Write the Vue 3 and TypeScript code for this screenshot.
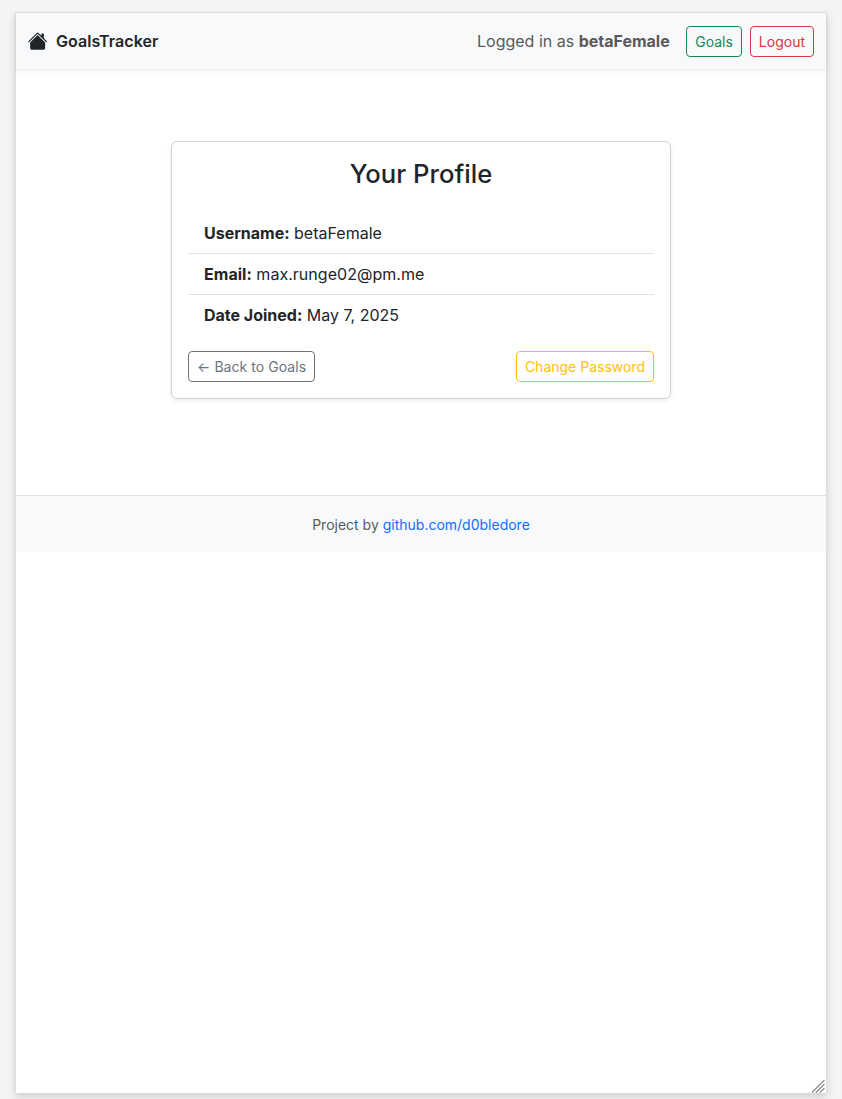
<script setup lang="ts">
interface ProfileField {
  label: string
  value: string
}

const username = 'betaFemale'
const fields: ProfileField[] = [
  { label: 'Username:', value: username },
  { label: 'Email:', value: 'max.runge02@pm.me' },
  { label: 'Date Joined:', value: 'May 7, 2025' },
]
</script>

<template>
  <div class="backdrop">
    <div class="viewport">
      <nav class="navbar">
        <a class="brand">
          <svg class="house" viewBox="0.3 0 16 16" width="20" height="20" fill="currentColor" aria-hidden="true">
            <path d="M8.707 1.5a1 1 0 0 0-1.414 0L.646 8.146a.5.5 0 0 0 .708.708L8 2.207l6.646 6.647a.5.5 0 0 0 .708-.708L13 5.793V2.5a.5.5 0 0 0-.5-.5h-1a.5.5 0 0 0-.5.5v1.293z" />
            <path d="m8 3.293 6 6V13.5a1.5 1.5 0 0 1-1.5 1.5h-9A1.5 1.5 0 0 1 2 13.5V9.293z" />
          </svg>
          <span>GoalsTracker</span>
        </a>
        <div class="session">
          <span class="login">Logged in as <strong>{{ username }}</strong></span>
          <button class="btn success">Goals</button>
          <button class="btn danger">Logout</button>
        </div>
      </nav>
      <main class="content">
        <section class="card">
          <h3>Your Profile</h3>
          <ul class="fields">
            <li v-for="field in fields" :key="field.label">
              <strong>{{ field.label }}</strong> {{ field.value }}
            </li>
          </ul>
          <div class="actions">
            <button class="btn secondary">← Back to Goals</button>
            <button class="btn warning">Change Password</button>
          </div>
        </section>
      </main>
      <footer class="footer">
        <small>Project by <a>github.com/d0bledore</a></small>
      </footer>
      <svg class="grip" width="13" height="13" viewBox="0 0 13 13" fill="none" stroke="#8b8b8b" stroke-width="1.3" aria-hidden="true">
        <path d="M0 12.5L12.5 0M4 12.5L12.5 4M8 12.5L12.5 8" />
      </svg>
    </div>
  </div>
</template>

<style>
body {
  margin: 0;
  background: #f4f4f4;
}
</style>

<style scoped>
.backdrop {
  box-sizing: border-box;
  height: 1099px;
  padding: 12px 15px 0;
  overflow: hidden;
  font: 400 16px/1.5 Inter, sans-serif;
  color: #212529;
}
.viewport {
  box-sizing: border-box;
  position: relative;
  height: 1081px;
  border: 1px solid #dcdee0;
  border-bottom: 0;
  background: #fff;
  box-shadow: 0 4px 8px rgba(0, 0, 0, 0.15);
}
.navbar {
  position: relative;
  box-sizing: border-box;
  display: flex;
  align-items: center;
  justify-content: space-between;
  height: 56px;
  padding: 0 12px;
  background: #f8f9fa;
  box-shadow: 0 2px 4px rgba(0, 0, 0, 0.075);
}
.brand {
  display: flex;
  align-items: center;
  gap: 8px;
  font-weight: 600;
  letter-spacing: 0.05px;
}
.house {
  display: block;
}
.session {
  display: flex;
  align-items: center;
  gap: 8px;
}
.login {
  margin-right: 8.5px;
  color: #595959;
}
strong {
  font-weight: 700;
}
.btn {
  box-sizing: border-box;
  height: 31px;
  margin: 0;
  padding: 4px 8px;
  border: 1px solid currentColor;
  border-radius: 4px;
  background: transparent;
  font: 400 14px/21px Inter, sans-serif;
  white-space: nowrap;
}
.success {
  color: #198754;
}
.danger {
  color: #dc3545;
}
.secondary {
  color: #6c757d;
  letter-spacing: 0.05px;
}
.warning {
  color: #ffc107;
}
.content {
  padding: 72px 0 96px;
}
.card {
  box-sizing: border-box;
  width: 500px;
  height: 258px;
  margin: 0 auto;
  padding: 16px;
  border: 1px solid #d2d3d4;
  border-radius: 6px;
  box-shadow: 0 2px 4px rgba(0, 0, 0, 0.075);
}
h3 {
  margin: 0 0 23px;
  padding-top: 1px;
  font-size: 25.66px;
  font-weight: 500;
  line-height: 1.2;
  text-align: center;
}
.fields {
  margin: 0 0 16px;
  padding: 0;
  list-style: none;
}
.fields li {
  padding: 8px 16px;
  border-bottom: 1px solid #dee2e6;
}
.fields li:nth-child(2) {
  letter-spacing: 0.03px;
}
.fields li:last-child {
  border-bottom: 0;
}
.actions {
  display: flex;
  justify-content: space-between;
}
.footer {
  padding: 16px;
  border-top: 1px solid #dee2e6;
  background: #f8f9fa;
  color: #595959;
  text-align: center;
}
.footer small {
  font-size: 14px;
}
.footer a {
  color: #0d6efd;
}
.grip {
  position: absolute;
  right: 1px;
  bottom: 0;
}
</style>
